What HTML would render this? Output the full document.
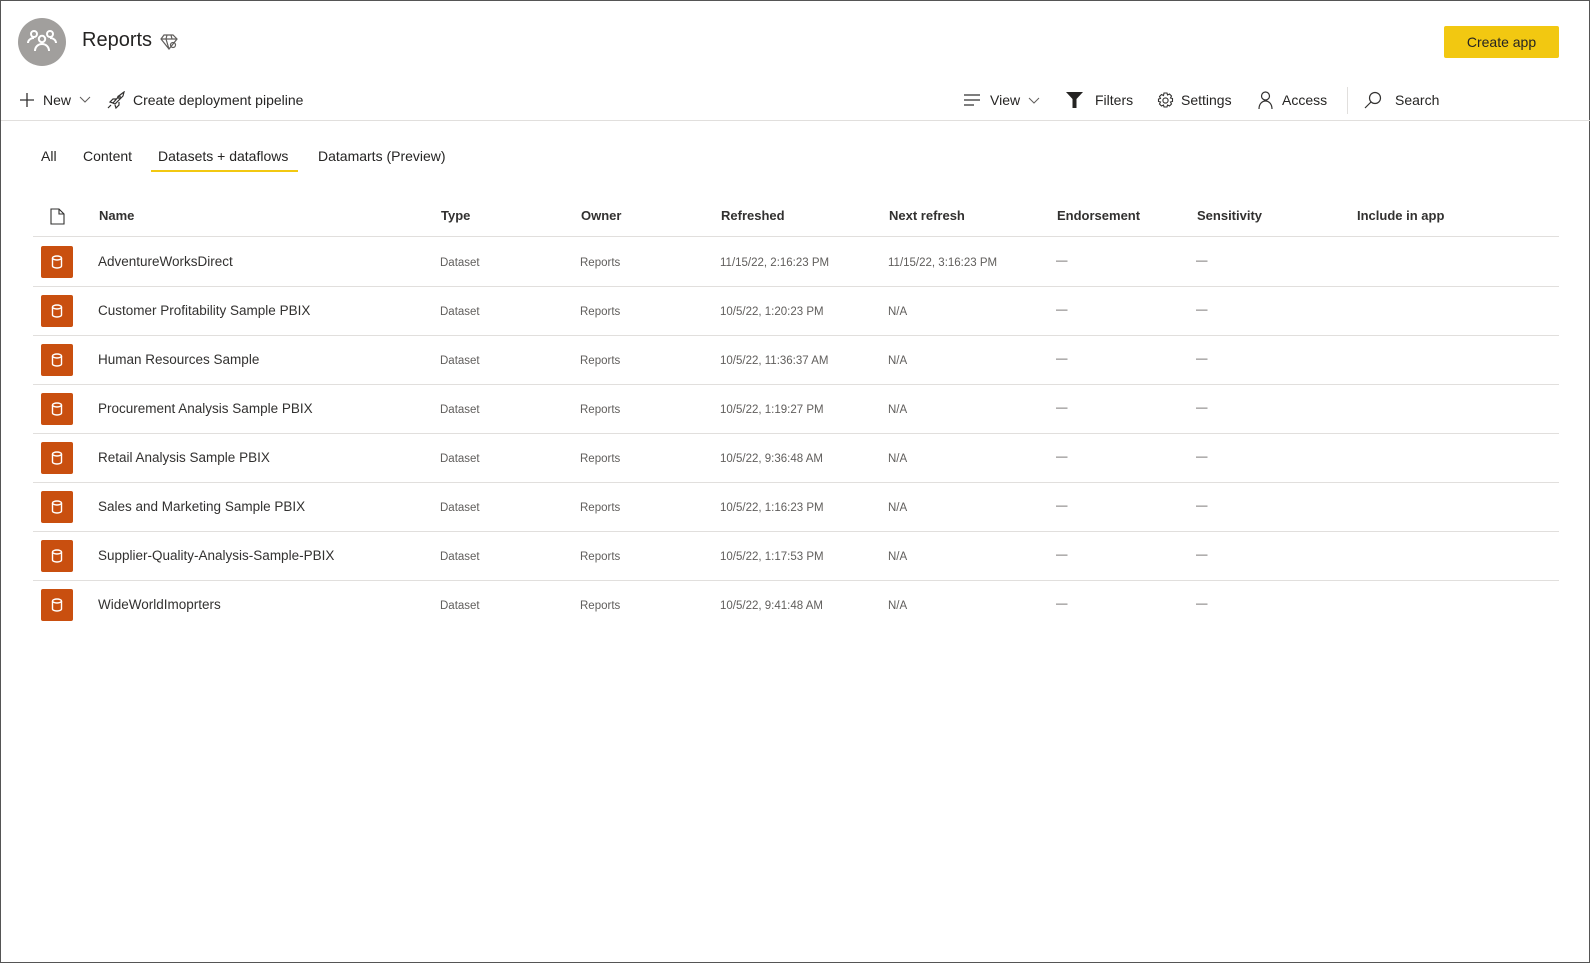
<!DOCTYPE html>
<html><head><meta charset="utf-8"><style>
*{margin:0;padding:0;box-sizing:border-box}
body{width:1590px;height:963px;background:#fff;font-family:"Liberation Sans",sans-serif;color:#252423;position:relative;overflow:hidden;border:1px solid #555}
.a{position:absolute;white-space:nowrap}
.t{font-size:14px;color:#252423}
.h{font-size:13px;font-weight:bold;color:#323130;top:207px}
.r{font-size:11.5px;color:#605e5c}
.n{font-size:13.5px;color:#323130}
.ico{position:absolute;left:40px;width:32px;height:32px;background:#c94f0f;border-radius:2px}
.line{position:absolute;left:32px;width:1526px;height:1px;background:#e1dfdd}
</style></head><body>
<div class="a" style="left:17px;top:17px;width:48px;height:48px;border-radius:50%;background:#a19f9d"></div>
<svg class="a" style="left:25px;top:28px" width="32" height="24" viewBox="0 0 32 24" fill="none" stroke="#fff" stroke-width="2"><circle cx="8" cy="5" r="3"/><circle cx="24" cy="5" r="3"/><circle cx="16" cy="10" r="3.2"/><path d="M2 14c0-3 3-5 6-5M30 14c0-3-3-5-6-5M9 22c0-4 3-7 7-7s7 3 7 7"/></svg>
<div class="a" style="left:81px;top:28px;font-size:20px;color:#252423">Reports</div>
<svg class="a" style="left:159px;top:33px" width="18" height="16" viewBox="0 0 18 16" fill="none" stroke="#605e5c" stroke-width="1.2"><path d="M4 1h9l4 4-8 10L1 5z M1 5h16 M7 1 6 5l3 10 M11 1l1 4"/><circle cx="13" cy="11" r="2.5"/></svg>
<div class="a" style="left:1443px;top:25px;width:115px;height:32px;background:#f2c811;border-radius:2px;font-size:14px;line-height:32px;text-align:center;color:#252423">Create app</div>

<svg class="a" style="left:18px;top:91px" width="16" height="16" stroke="#323130" stroke-width="1.3"><path d="M8 1v14M1 8h14"/></svg>
<div class="a t" style="left:42px;top:91px">New</div>
<svg class="a" style="left:78px;top:95px" width="12" height="8" fill="none" stroke="#605e5c"><path d="M1 1l5 5 5-5"/></svg>
<svg class="a" style="left:106px;top:90px" width="18" height="18" fill="none" stroke="#323130" stroke-width="1.2"><path d="M6 12 13 4l4-3-1 4-8 8zM6 12l-3-1 3-3h3M8 14l1 3 3-3v-3"/><circle cx="12" cy="6" r="1.2"/><path d="M4 14l-3 3"/></svg>
<div class="a t" style="left:132px;top:91px">Create deployment pipeline</div>

<svg class="a" style="left:963px;top:93px" width="17" height="12" stroke="#323130" stroke-width="1.2"><path d="M0 1h16M0 6h16M0 11h10"/></svg>
<div class="a t" style="left:989px;top:91px">View</div>
<svg class="a" style="left:1027px;top:96px" width="12" height="8" fill="none" stroke="#605e5c"><path d="M1 1l5 5 5-5"/></svg>
<svg class="a" style="left:1065px;top:91px" width="17" height="16"><path d="M0 0h17l-6.5 7v9H6.5V7z" fill="#252423"/></svg>
<div class="a t" style="left:1094px;top:91px">Filters</div>
<svg class="a" style="left:1156px;top:91px" width="17" height="17" fill="none" stroke="#323130" stroke-width="1.1"><circle cx="8.5" cy="8.5" r="2.6"/><path d="M7 1h3l.5 2 2-1 2 2-1 2 2 .5v3l-2 .5 1 2-2 2-2-1-.5 2H7l-.5-2-2 1-2-2 1-2-2-.5V7l2-.5-1-2 2-2 2 1z"/></svg>
<div class="a t" style="left:1180px;top:91px">Settings</div>
<svg class="a" style="left:1257px;top:90px" width="15" height="18" fill="none" stroke="#323130" stroke-width="1.2"><circle cx="7.5" cy="5" r="4"/><path d="M1 18c0-5 3-8 6.5-8s6.5 3 6.5 8"/></svg>
<div class="a t" style="left:1281px;top:91px">Access</div>
<div class="a" style="left:1346px;top:86px;width:1px;height:27px;background:#e1dfdd"></div>
<svg class="a" style="left:1363px;top:90px" width="18" height="18" fill="none" stroke="#323130" stroke-width="1.2"><circle cx="11" cy="7" r="5.5"/><path d="M7 11l-6 6"/></svg>
<div class="a t" style="left:1394px;top:91px">Search</div>
<div class="a" style="left:0;top:119px;width:1590px;height:1px;background:#e1dfdd"></div>

<div class="a t" style="left:40px;top:147px">All</div>
<div class="a t" style="left:82px;top:147px">Content</div>
<div class="a t" style="left:157px;top:147px">Datasets + dataflows</div>
<div class="a" style="left:150px;top:169px;width:147px;height:2px;background:#f2c811"></div>
<div class="a t" style="left:317px;top:147px">Datamarts (Preview)</div>

<svg class="a" style="left:49px;top:207px" width="15" height="17" fill="none" stroke="#323130" stroke-width="1.1"><path d="M1 1h8l5 5v10H1zM9 1v5h5"/></svg>
<div class="a h" style="left:98px">Name</div>
<div class="a h" style="left:440px">Type</div>
<div class="a h" style="left:580px">Owner</div>
<div class="a h" style="left:720px">Refreshed</div>
<div class="a h" style="left:888px">Next refresh</div>
<div class="a h" style="left:1056px">Endorsement</div>
<div class="a h" style="left:1196px">Sensitivity</div>
<div class="a h" style="left:1356px">Include in app</div>
<div class="line" style="top:235px"></div>

<div id="rows"></div>
<script>
var d=[["AdventureWorksDirect","11/15/22, 2:16:23 PM","11/15/22, 3:16:23 PM"],["Customer Profitability Sample PBIX","10/5/22, 1:20:23 PM","N/A"],["Human Resources Sample","10/5/22, 11:36:37 AM","N/A"],["Procurement Analysis Sample PBIX","10/5/22, 1:19:27 PM","N/A"],["Retail Analysis Sample PBIX","10/5/22, 9:36:48 AM","N/A"],["Sales and Marketing Sample PBIX","10/5/22, 1:16:23 PM","N/A"],["Supplier-Quality-Analysis-Sample-PBIX","10/5/22, 1:17:53 PM","N/A"],["WideWorldImoprters","10/5/22, 9:41:48 AM","N/A"]];
var h="";
d.forEach(function(r,i){var c=261+i*49;
h+='<div class="ico" style="top:'+(c-16)+'px"><svg width="32" height="32" fill="none" stroke="#fff" stroke-width="1.4"><ellipse cx="16" cy="12" rx="4.5" ry="2"/><path d="M11.5 12v8c0 1.1 2 2 4.5 2s4.5-.9 4.5-2v-8"/></svg></div>';
h+='<div class="a n" style="left:97px;top:'+(c-8)+'px">'+r[0]+'</div>';
h+='<div class="a r" style="left:439px;top:'+(c-5)+'px">Dataset</div>';
h+='<div class="a r" style="left:579px;top:'+(c-5)+'px">Reports</div>';
h+='<div class="a r" style="left:719px;top:'+(c-5)+'px">'+r[1]+'</div>';
h+='<div class="a r" style="left:887px;top:'+(c-5)+'px">'+r[2]+'</div>';
h+='<div class="a r" style="left:1055px;top:'+(c-7)+'px">—</div>';
h+='<div class="a r" style="left:1195px;top:'+(c-7)+'px">—</div>';
if(i<7)h+='<div class="line" style="top:'+(c+24)+'px"></div>';});
document.getElementById("rows").innerHTML=h;
</script>
</body></html>
